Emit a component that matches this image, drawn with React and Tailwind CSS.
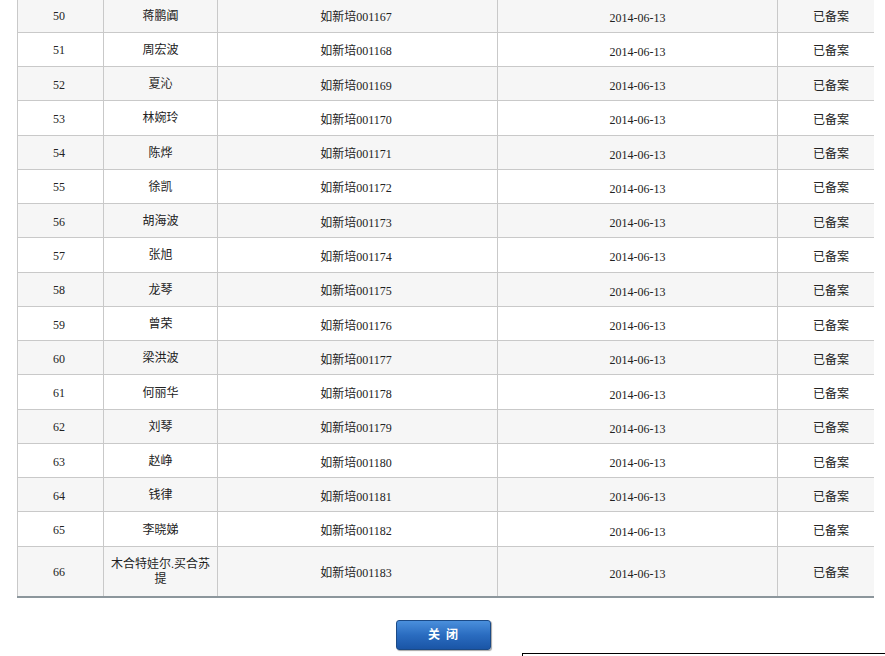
const rows = [
  ["50", "蒋鹏阗", "001167"],
  ["51", "周宏波", "001168"],
  ["52", "夏沁", "001169"],
  ["53", "林婉玲", "001170"],
  ["54", "陈烨", "001171"],
  ["55", "徐凯", "001172"],
  ["56", "胡海波", "001173"],
  ["57", "张旭", "001174"],
  ["58", "龙琴", "001175"],
  ["59", "曾荣", "001176"],
  ["60", "梁洪波", "001177"],
  ["61", "何丽华", "001178"],
  ["62", "刘琴", "001179"],
  ["63", "赵峥", "001180"],
  ["64", "钱律", "001181"],
  ["65", "李晓娣", "001182"],
];

const cell = "flex items-center justify-center border-r border-[#c9c9c9] text-center";

function Row({ no, name, code, index, last }) {
  const bg = index % 2 === 0 ? "bg-[#f6f6f6]" : "bg-white";
  return (
    <div
      className={`flex ${bg} ${
        last ? "h-[51px] border-b-2 border-[#8c969c]" : "h-[34.27px] border-b border-[#c9c9c9]"
      }`}
    >
      <div className={`${cell} w-[87px] border-l pt-[2px] pr-[3px]`}>{no}</div>
      <div className={`${cell} w-[114px] leading-[15px] px-1 pt-[2px]`}>{name}</div>
      <div className={`${cell} w-[280px] pt-[4px] pr-[3px]`}>如新培{code}</div>
      <div className={`${cell} w-[280px] pt-[5px]`}>2014-06-13</div>
      <div className="flex items-center justify-center w-[96px] pl-[10px] pt-[4px]">已备案</div>
    </div>
  );
}

export default function App() {
  return (
    <div
      className="w-[885px] h-[656px] overflow-hidden bg-white text-[12px] text-[#222]"
      style={{ fontFamily: '"Liberation Serif", "Noto Sans CJK SC", serif' }}
    >
      <div className="ml-[17px] w-[857px] -mt-[1.5px]">
        {rows.map((r, i) => (
          <Row key={r[0]} no={r[0]} name={r[1]} code={r[2]} index={i} />
        ))}
        <Row no="66" name="木合特娃尔.买合苏提" code="001183" index={16} last />
      </div>

      <div className="flex justify-center pl-[1px] mt-[22px]">
        <button className="w-[95px] h-[30px] rounded-[3px] border border-[#1b4a86] bg-gradient-to-b from-[#4a8fdc] via-[#2a6cc0] to-[#1a55a6] shadow-[1px_1px_1px_rgba(0,0,0,0.35)] text-white font-bold text-[12px] tracking-[6px] pl-[6px]">
          关闭
        </button>
      </div>

      <div className="ml-[522px] mt-[3px] h-[20px] border-l border-t border-black" />
    </div>
  );
}
